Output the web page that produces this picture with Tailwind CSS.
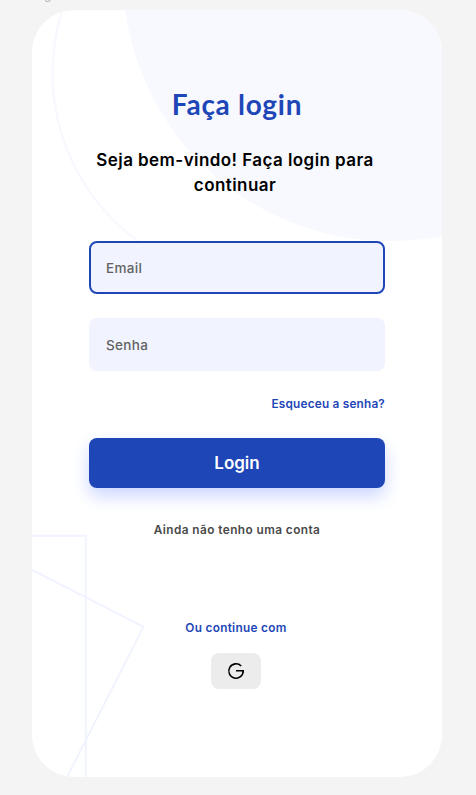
<!DOCTYPE html>
<html lang="pt-BR">
<head>
<meta charset="utf-8">
<title>Faça login</title>
<script src="https://cdn.jsdelivr.net/npm/@tailwindcss/browser@4"></script>
</head>
<body class="relative h-[795px] w-[476px] overflow-hidden bg-[#f4f4f4] pl-8 pt-2.5 font-['Inter',sans-serif]">
  <span class="absolute left-[30px] top-[-12px] text-[12px] leading-[14px] text-[#b3b3b3]">Login</span>
  <main class="relative flex h-[767px] w-[410px] flex-col overflow-hidden rounded-[42px] bg-white px-[57px]">
    <svg class="absolute inset-0" width="410" height="767" viewBox="32 10 410 767" fill="none" aria-hidden="true">
      <circle cx="260.5" cy="73" r="208" stroke="#f8f9ff" stroke-width="2.4"/>
      <circle cx="389" cy="-25" r="266" fill="#f8f9ff"/>
      <path d="M20 535.8H85.8V790M20 564L32 570L143.6 626.8L63 785" stroke="#f1f4ff" stroke-width="2"/>
    </svg>
    <h1 class="relative mt-[76px] text-center font-['Lato',sans-serif] text-[28px] font-bold leading-9 tracking-[0.7px] text-[#1e46b7]">Faça login</h1>
    <p class="relative mt-[26px] -ml-3 -mr-2 whitespace-nowrap text-center text-[17px] font-semibold leading-[25px] tracking-[0.43px] text-black">Seja bem-vindo! Faça login para<br>continuar</p>
    <form class="relative mt-[43px] flex flex-col">
      <input type="text" placeholder="Email" class="h-[53px] w-[296px] rounded-lg border-2 border-[#1e46b7] bg-[#f1f4ff] px-[15px] text-[13.5px] font-medium tracking-[0.35px] placeholder:text-[#626262] placeholder:opacity-100">
      <input type="password" placeholder="Senha" class="mt-6 h-[53px] w-[296px] rounded-lg bg-[#f1f4ff] px-[17px] text-[13.5px] font-medium tracking-[0.35px] placeholder:text-[#626262] placeholder:opacity-100">
      <a class="mt-6 self-end whitespace-nowrap text-[11.8px] font-semibold leading-[18px] tracking-[0.2px] text-[#1e46b7]">Esqueceu a senha?</a>
      <button type="button" class="mt-[25px] h-[50px] rounded-lg bg-[#1e46b7] pt-0.5 text-[17px] font-semibold text-white shadow-[0_8px_17px_#cbd6ff]">Login</button>
    </form>
    <a class="relative mt-[33px] text-center text-[11.8px] font-semibold leading-[18px] tracking-[0.44px] text-[#494949]">Ainda não tenho uma conta</a>
    <p class="relative mt-20 -ml-0.5 text-center text-[11.8px] font-semibold leading-[18px] tracking-[0.3px] text-[#1e46b7]">Ou continue com</p>
    <button type="button" aria-label="Google" class="relative mt-4 ml-[122px] flex h-9 w-[50px] items-center justify-center rounded-lg bg-[#ececec]">
      <svg width="18" height="18" viewBox="0 0 18 18" fill="none" stroke="#000" stroke-width="1.6"><path d="M14.2 4A7.2 7.2 0 1 0 16.2 8.8H9"/></svg>
    </button>
  </main>
</body>
</html>
